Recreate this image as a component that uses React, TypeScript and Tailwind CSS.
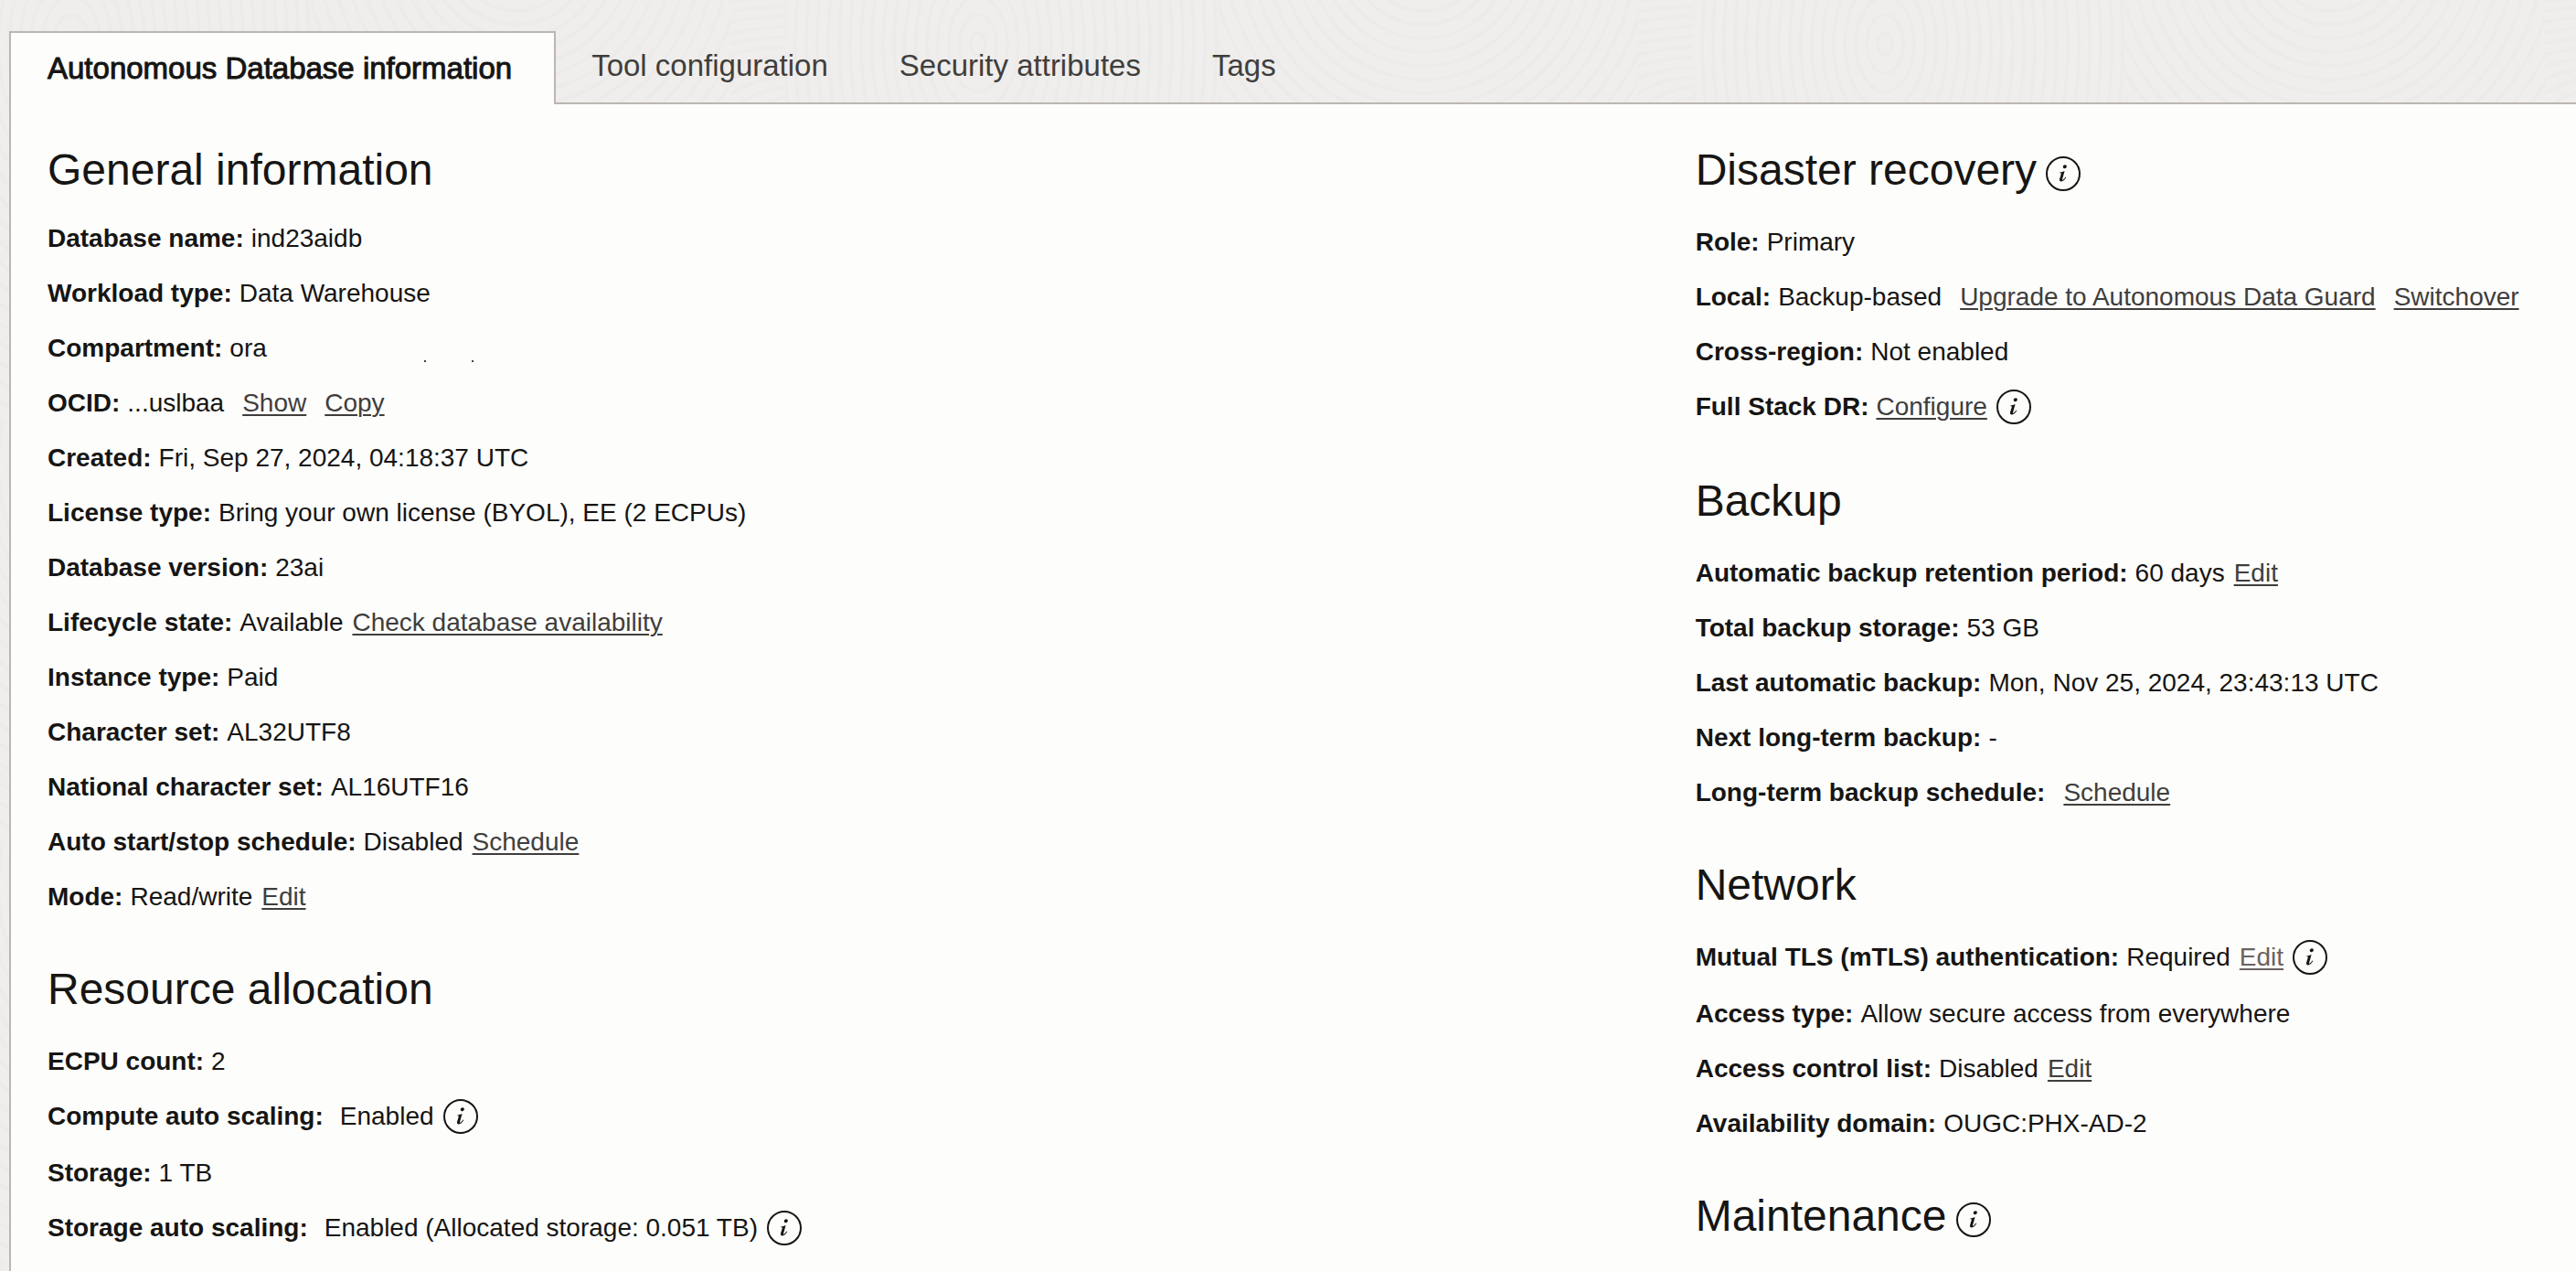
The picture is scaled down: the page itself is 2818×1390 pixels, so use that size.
import type { ReactNode } from "react";

function InfoIcon({ heading }: { heading?: boolean }) {
  return (
    <button
      type="button"
      aria-label="More information"
      className={"-my-2 ml-[10px] inline-block h-[38px] w-[38px] " + (heading ? "align-[-7px]" : "align-[-10px]")}
    >
      <svg viewBox="0 0 38 38" className="block h-full w-full" fill="none">
        <circle cx="19" cy="19" r="18" stroke="#161513" strokeWidth="2" />
        <ellipse cx="20.8" cy="11.2" rx="2.1" ry="1.9" fill="#161513" transform="rotate(-20 20.8 11.2)" />
        <path
          d="M15.4 17.4C17 17.2 18.8 16.8 20.6 16L18 25.2C17.9 25.8 18.4 25.9 18.9 25.5C19.9 24.8 20.8 23.8 21.6 22.6L22.3 23.1C20.8 25.8 18.8 27.5 16.9 27.5C15.3 27.5 14.6 26.5 15.1 24.8L16.9 18.7C16.6 18.3 16 18.3 15.4 18.3Z"
          fill="#161513"
        />
      </svg>
    </button>
  );
}

function Link({ children, gap = "normal", muted }: { children: ReactNode; gap?: "small" | "normal" | "wide"; muted?: boolean }) {
  const margins = { small: "ml-2 ", normal: "ml-[10px] ", wide: "ml-5 " };
  return (
    <a href="#" className={"underline decoration-2 underline-offset-3 " + margins[gap] + (muted ? "text-[#6b6361]" : "text-[#403e3c]")}>
      {children}
    </a>
  );
}

function Row({ label, value, wide, info, children }: { label: string; value?: string; wide?: boolean; info?: boolean; children?: ReactNode }) {
  return (
    <div className={info ? "pb-[30px]" : "pb-7"}>
      <dt className="inline font-bold">{label}:</dt>
      <dd className="inline">
        {value && <span className={wide ? "ml-[18px]" : "ml-2"}>{value}</span>}
        {children}
        {info && <InfoIcon />}
      </dd>
    </div>
  );
}

function Section({ title, info, first, children }: { title: string; info?: boolean; first?: boolean; children?: ReactNode }) {
  return (
    <section className="pb-[29px]">
      <h2 className={"text-[48px] leading-[56px] " + (first ? "pb-[31px]" : "pb-[35px]")}>
        {title}
        {info && <InfoIcon heading />}
      </h2>
      <dl>{children}</dl>
    </section>
  );
}

const rings = Array.from({ length: 30 }, (_, i) => i);

function Rings({ cx, cy, sx, sy }: { cx: number; cy: number; sx: number; sy: number }) {
  return (
    <>
      {rings.map((i) => (
        <ellipse key={i} cx={cx} cy={cy} rx={8 + i * sx} ry={12 + i * sy} />
      ))}
    </>
  );
}

function Texture() {
  return (
    <svg className="absolute inset-0 h-full w-full" aria-hidden="true">
      <defs>
        <pattern id="grain" width="992" height="460" patternUnits="userSpaceOnUse">
          <g fill="none" stroke="#ecebea" strokeWidth="4">
            <svg x="0" y="0" width="340" height="460">
              <Rings cx={78} cy={48} sx={12} sy={20} />
            </svg>
            <svg x="340" y="0" width="460" height="460">
              <Rings cx={225} cy={-60} sx={15} sy={15} />
            </svg>
            <svg x="800" y="0" width="60" height="460">
              <Rings cx={70} cy={140} sx={22} sy={11} />
            </svg>
            <svg x="860" y="0" width="132" height="460">
              <Rings cx={210} cy={48} sx={12} sy={20} />
            </svg>
          </g>
        </pattern>
      </defs>
      <rect width="100%" height="100%" fill="url(#grain)" />
    </svg>
  );
}

export default function App() {
  return (
    <div className="relative min-h-screen bg-[#efeeed] pl-[10px] font-['Liberation_Sans',Arial,sans-serif] text-[28px] leading-8 text-[#161513]">
      <Texture />
      <div className="relative flex min-h-screen flex-col pt-[34px]">
        <div role="tablist" className="flex items-stretch">
          <button
            type="button"
            role="tab"
            aria-selected="true"
            className="z-10 -mb-[2px] border-2 border-b-0 border-[#bcb6b1] bg-[#fdfdfc] pt-[21px] pr-[46px] pb-[21px] pl-10 text-[33px] leading-9 [-webkit-text-stroke:1px_#161513]"
          >
            Autonomous Database information
          </button>
          {["Tool configuration", "Security attributes", "Tags"].map((tab) => (
            <button key={tab} type="button" role="tab" aria-selected="false" className="px-[39px] pt-5 pb-[22px] text-[33px] leading-9 text-[#403e3c]">
              {tab}
            </button>
          ))}
        </div>
        <main className="grid flex-1 grid-cols-[2fr_1fr] border-t-2 border-l-2 border-[#bcb6b1] bg-[#fdfdfc] pt-11 pr-[62px] pl-10">
          <div>
            <Section title="General information" first>
              <Row label="Database name" value="ind23aidb" />
              <Row label="Workload type" value="Data Warehouse" />
              <Row label="Compartment" value="ora">
                <span aria-hidden="true" className="ml-[172px] inline-block h-[2px] w-[2px] bg-[#403e3c] align-[-6px]" />
                <span aria-hidden="true" className="ml-[50px] inline-block h-[2px] w-[2px] bg-[#403e3c] align-[-6px]" />
              </Row>
              <Row label="OCID" value="...uslbaa">
                <Link gap="wide">Show</Link>
                <Link gap="wide">Copy</Link>
              </Row>
              <Row label="Created" value="Fri, Sep 27, 2024, 04:18:37 UTC" />
              <Row label="License type" value="Bring your own license (BYOL), EE (2 ECPUs)" />
              <Row label="Database version" value="23ai" />
              <Row label="Lifecycle state" value="Available">
                <Link>Check database availability</Link>
              </Row>
              <Row label="Instance type" value="Paid" />
              <Row label="Character set" value="AL32UTF8" />
              <Row label="National character set" value="AL16UTF16" />
              <Row label="Auto start/stop schedule" value="Disabled">
                <Link>Schedule</Link>
              </Row>
              <Row label="Mode" value="Read/write">
                <Link>Edit</Link>
              </Row>
            </Section>
            <Section title="Resource allocation">
              <Row label="ECPU count" value="2" />
              <Row label="Compute auto scaling" value="Enabled" wide info />
              <Row label="Storage" value="1 TB" />
              <Row label="Storage auto scaling" value="Enabled (Allocated storage: 0.051 TB)" wide info />
            </Section>
          </div>
          <div className="whitespace-nowrap">
            <Section title="Disaster recovery" info>
              <Row label="Role" value="Primary" />
              <Row label="Local" value="Backup-based">
                <Link gap="wide">Upgrade to Autonomous Data Guard</Link>
                <Link gap="wide">Switchover</Link>
              </Row>
              <Row label="Cross-region" value="Not enabled" />
              <Row label="Full Stack DR" info>
                <Link gap="small">Configure</Link>
              </Row>
            </Section>
            <Section title="Backup">
              <Row label="Automatic backup retention period" value="60 days">
                <Link>Edit</Link>
              </Row>
              <Row label="Total backup storage" value="53 GB" />
              <Row label="Last automatic backup" value="Mon, Nov 25, 2024, 23:43:13 UTC" />
              <Row label="Next long-term backup" value="-" />
              <Row label="Long-term backup schedule">
                <Link gap="wide">Schedule</Link>
              </Row>
            </Section>
            <Section title="Network">
              <Row label="Mutual TLS (mTLS) authentication" value="Required" info>
                <Link muted>Edit</Link>
              </Row>
              <Row label="Access type" value="Allow secure access from everywhere" />
              <Row label="Access control list" value="Disabled">
                <Link>Edit</Link>
              </Row>
              <Row label="Availability domain" value="OUGC:PHX-AD-2" />
            </Section>
            <Section title="Maintenance" info />
          </div>
        </main>
      </div>
    </div>
  );
}
